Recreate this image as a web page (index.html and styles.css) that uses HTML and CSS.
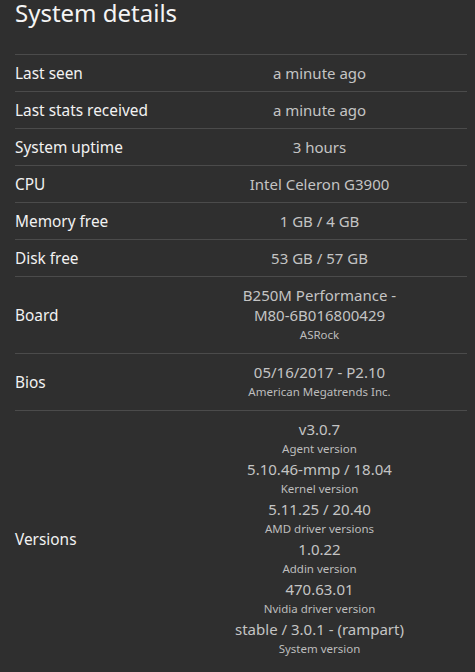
FILE: index.html
```html
<!DOCTYPE html>
<html>
<head>
<meta charset="utf-8">
<link rel="stylesheet" href="styles.css">
</head>
<body>
<div class="page">
  <h1 class="title">System details</h1>
  <div class="table">
    <div class="row"><div class="label">Last seen</div><div class="value"><div class="main">a minute ago</div></div></div>
    <div class="row"><div class="label">Last stats received</div><div class="value"><div class="main">a minute ago</div></div></div>
    <div class="row"><div class="label">System uptime</div><div class="value"><div class="main">3 hours</div></div></div>
    <div class="row"><div class="label">CPU</div><div class="value"><div class="main">Intel Celeron G3900</div></div></div>
    <div class="row"><div class="label">Memory free</div><div class="value"><div class="main">1 GB / 4 GB</div></div></div>
    <div class="row"><div class="label">Disk free</div><div class="value"><div class="main">53 GB / 57 GB</div></div></div>
    <div class="row"><div class="label">Board</div><div class="value"><div class="main">B250M Performance - <span class="nowrap">M80-6B016800429</span></div><div class="sub">ASRock</div></div></div>
    <div class="row"><div class="label">Bios</div><div class="value"><div class="main">05/16/2017 - P2.10</div><div class="sub">American Megatrends Inc.</div></div></div>
    <div class="row"><div class="label">Versions</div><div class="value">
      <div class="main">v3.0.7</div><div class="sub">Agent version</div>
      <div class="main">5.10.46-mmp / 18.04</div><div class="sub">Kernel version</div>
      <div class="main">5.11.25 / 20.40</div><div class="sub">AMD driver versions</div>
      <div class="main">1.0.22</div><div class="sub">Addin version</div>
      <div class="main">470.63.01</div><div class="sub">Nvidia driver version</div>
      <div class="main">stable / 3.0.1 - (rampart)</div><div class="sub">System version</div>
    </div></div>
  </div>
</div>
</body>
</html>
```
FILE: styles.css
```css
html, body {
  margin: 0;
  padding: 0;
  background: #2f2f2f;
}
body {
  font-family: "Noto Sans", "DejaVu Sans", sans-serif;
  color: #ececec;
}
.page {
  padding: 0 8px 0 15px;
}
.title {
  margin: 0;
  font-size: 24px;
  font-weight: normal;
  line-height: 26px;
  color: #f4f4f4;
  padding-bottom: 28px;
}
.row {
  display: grid;
  grid-template-columns: 157px 1fr;
  align-items: center;
  border-top: 1px solid #4b4b4b;
  padding: 8px 0;
}
.label {
  font-size: 15.4px;
  line-height: 20px;
  margin: 1px 0 -1px;
  color: #f2f2f2;
}
.value {
  text-align: center;
  padding: 0 12px;
}
.main {
  font-size: 15px;
  line-height: 20px;
  color: #c4c4c4;
}
.nowrap {
  white-space: nowrap;
}
.sub {
  font-size: 11.5px;
  line-height: 20px;
  color: #bdbdbd;
}
```
